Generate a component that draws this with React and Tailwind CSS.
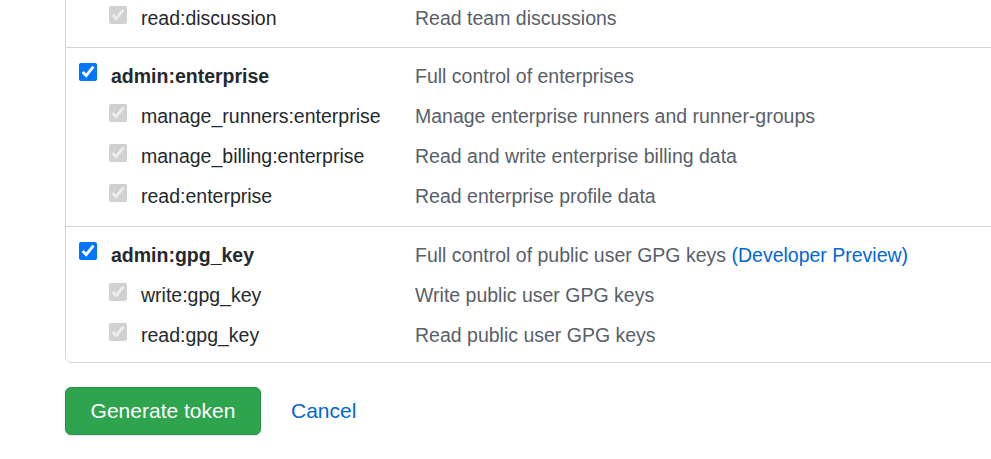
import React from 'react';

const sections = [
    {
        main: null,
        subs: [{ name: 'read:discussion', desc: 'Read team discussions' }],
    },
    {
        main: { name: 'admin:enterprise', desc: 'Full control of enterprises' },
        subs: [
            { name: 'manage_runners:enterprise', desc: 'Manage enterprise runners and runner-groups' },
            { name: 'manage_billing:enterprise', desc: 'Read and write enterprise billing data' },
            { name: 'read:enterprise', desc: 'Read enterprise profile data' },
        ],
    },
    {
        main: { name: 'admin:gpg_key', desc: 'Full control of public user GPG keys', preview: true },
        subs: [
            { name: 'write:gpg_key', desc: 'Write public user GPG keys' },
            { name: 'read:gpg_key', desc: 'Read public user GPG keys' },
        ],
    },
];

const pad = ['pb-[9px]', 'pb-[10px]', 'pb-[7px]'];

const Row = ({ item, sub }) => (
    <div className="flex items-center h-10">
        <div className={`flex items-center w-[336px] ${sub ? 'pl-[30px]' : ''}`}>
            {/* checkbox sits a little above the text's middle */}
            <input
                type="checkbox"
                checked
                readOnly
                disabled={sub}
                className={`w-[18px] h-[18px] m-0 shrink-0 ${sub ? 'mb-[7px]' : 'mb-[8px]'}`}
            />
            <span className={`ml-[14px] pt-[2px] text-[#24292e] ${sub ? '' : 'font-bold'}`}>{item.name}</span>
        </div>
        <span className="pt-[2px] text-[#586069]">
            {item.desc}
            {item.preview && <span className="text-[#0366d6]"> (Developer Preview)</span>}
        </span>
    </div>
);

export default function App() {
    return (
        <div
            className="w-[991px] h-[459px] overflow-hidden bg-white text-[19.5px]"
            style={{ fontFamily: '"Liberation Sans", Arial, sans-serif' }}
        >
            <div className="ml-[65px] w-[1000px] -mt-[11px] border border-[#d1d5da] rounded-md">
                {sections.map((s, i) => (
                    <div
                        key={i}
                        className={`pl-[13px] pt-2 ${pad[i]} ${i > 0 ? 'border-t border-[#d1d5da]' : ''}`}
                    >
                        {s.main && <Row item={s.main} />}
                        {s.subs.map((x) => (
                            <Row key={x.name} item={x} sub />
                        ))}
                    </div>
                ))}
            </div>
            <div className="flex items-center ml-[65px] mt-[24px] text-[21px]">
                <button className="w-[196px] h-12 rounded-md bg-[#2ea44f] border border-[#2a9147] text-white shadow-sm">
                    Generate token
                </button>
                <a href="#" className="ml-[30px] text-[#0366d6]">Cancel</a>
            </div>
        </div>
    );
}
